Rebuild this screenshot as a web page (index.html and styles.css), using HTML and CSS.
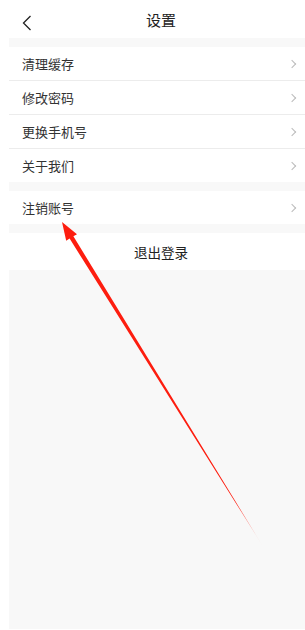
FILE: index.html
```html
<!DOCTYPE html>
<html lang="zh-CN">
<head>
  <meta charset="UTF-8" />
  <meta name="viewport" content="width=device-width, initial-scale=1.0"/>
  <title>设置</title>
  <link rel="stylesheet" href="styles.css">
</head>
<body>
  <div class="header">
    <span class="back">
      <svg width="10" height="16" viewBox="0 0 10 16"><path d="M8.5 1 L1.5 8 L8.5 15" fill="none" stroke="#222" stroke-width="1.3"/></svg>
    </span>
    <div class="title">设置</div>
  </div>

  <div class="page">
    <div class="gap"></div>
    <div class="group">
      <div class="row"><span>清理缓存</span><i class="arrow"></i></div>
      <div class="row"><span>修改密码</span><i class="arrow"></i></div>
      <div class="row"><span>更换手机号</span><i class="arrow"></i></div>
      <div class="row"><span>关于我们</span><i class="arrow"></i></div>
    </div>
    <div class="gap"></div>
    <div class="group">
      <div class="row"><span>注销账号</span><i class="arrow"></i></div>
    </div>
    <div class="gap"></div>
    <div class="logout">退出登录</div>
    <div class="rest"></div>
  </div>

  <!-- 标注箭头 -->
  <svg class="mark" width="305" height="630" viewBox="0 0 305 630">
    <defs>
      <linearGradient id="fade" gradientUnits="userSpaceOnUse" x1="62" y1="222" x2="264" y2="548">
        <stop offset="0" stop-color="#fd1d0f"/>
        <stop offset="0.86" stop-color="#fd1d0f"/>
        <stop offset="1" stop-color="#fd1d0f" stop-opacity="0"/>
      </linearGradient>
    </defs>
    <polygon fill="url(#fade)" points="62,222 77,234.2 73.4,236.3 264,548 69.6,238.6 66.2,240.8"/>
  </svg>
</body>
</html>
```

FILE: styles.css
```css
body { margin: 0; font-family: "Noto Sans CJK SC", "Noto Sans", sans-serif; background: white; color: #333; }

.header {
  height: 38px; display: flex; align-items: center; justify-content: center;
  position: relative; padding-left: 17px; box-sizing: border-box;
}
.header .back { position: absolute; left: 22px; top: 12px; }
.title { font-size: 15px; color: #222; }

.page { padding-left: 9px; }
.gap { height: 9px; background: #f8f8f8; }

.row {
  height: 34px; display: flex; align-items: center; justify-content: space-between;
  padding: 0 8px 0 13px; border-bottom: 1px solid #ececec; box-sizing: border-box;
  font-size: 13px; color: #333;
}
.row:last-child { border-bottom: none; height: 33px; }
.arrow {
  width: 5px; height: 5px; border-top: 1px solid #bbb; border-right: 1px solid #bbb;
  transform: rotate(45deg); margin-right: 2px;
}

.logout {
  height: 37px; display: flex; align-items: center; justify-content: center;
  padding-left: 8px; font-size: 13.5px; color: #222;
}
.rest { height: 359px; background: #f8f8f8; }

.mark { position: absolute; left: 0; top: 0; pointer-events: none; }
```
